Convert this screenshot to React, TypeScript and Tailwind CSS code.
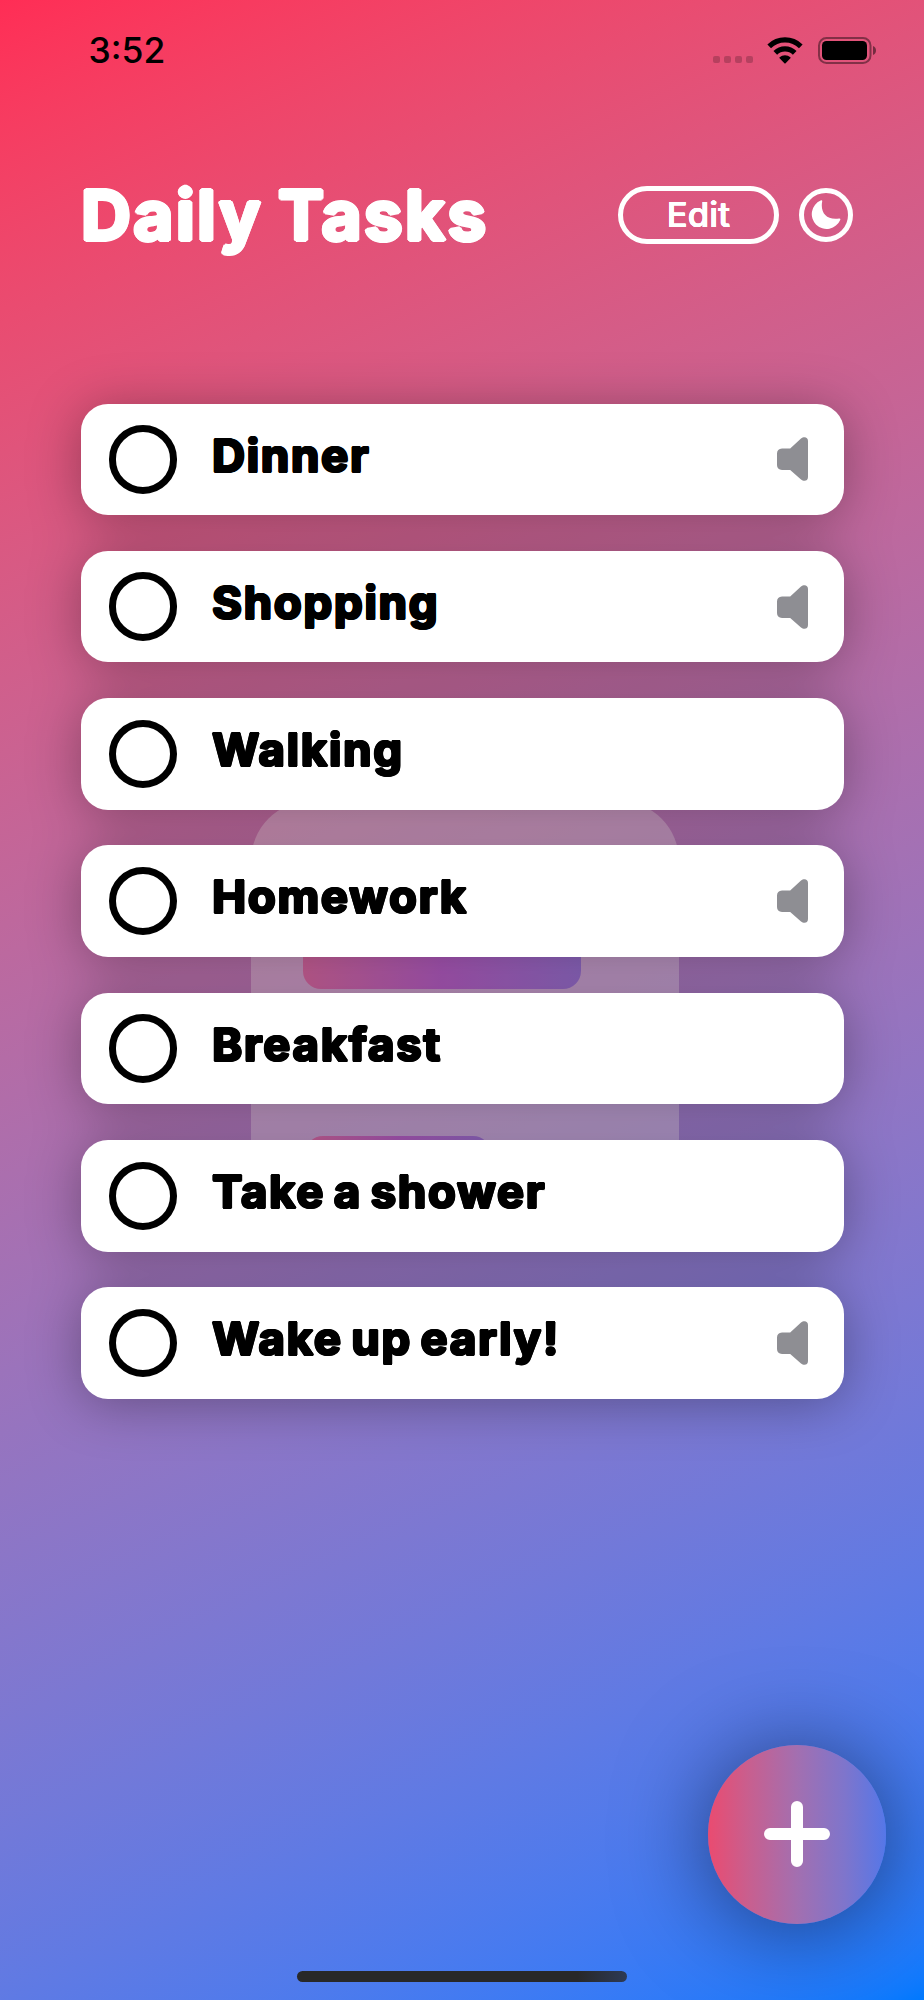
import React, { useState } from 'react'
import clsx from 'clsx'

type Task = {
  id: string
  name: string
  hasSound: boolean
}

const sampleTasks: Task[] = [
  { id: 'a', name: 'Dinner', hasSound: true },
  { id: 'b', name: 'Shopping', hasSound: true },
  { id: 'c', name: 'Walking', hasSound: false },
  { id: 'd', name: 'Homework', hasSound: true },
  { id: 'e', name: 'Breakfast', hasSound: false },
  { id: 'f', name: 'Take a shower', hasSound: false },
  { id: 'g', name: 'Wake up early!', hasSound: true },
]

const WifiIcon = () => (
  <svg className="w-[36px] h-[27px]" viewBox="0 0 36 27" fill="none">
    <path d="M2.2 9.3a22.6 22.6 0 0 1 31.6 0" stroke="#000" strokeWidth="5.2" />
    <path d="M8.3 15.9a13.8 13.8 0 0 1 19.4 0" stroke="#000" strokeWidth="5.2" />
    <path
      d="M12.6 20.3a7.8 7.8 0 0 1 10.8 0q.5.5 0 1l-4.8 4.9q-.6.6-1.2 0l-4.8-4.9q-.5-.5 0-1z"
      fill="#000"
    />
  </svg>
)

const BatteryIcon = () => (
  <svg className="w-[59px] h-[27px]" viewBox="0 0 59 27">
    <rect
      x="1"
      y="1"
      width="51.5"
      height="25"
      rx="7.5"
      fill="none"
      stroke="#000"
      strokeOpacity=".42"
      strokeWidth="2"
    />
    <rect x="4" y="4" width="45" height="19" rx="4.5" fill="#000" />
    <path d="M55 9c4 1.300 4 7.700 0 9z" fill="#000" fillOpacity=".48" />
  </svg>
)

const MoonIcon = () => (
  <svg className="w-[30px] h-[30px]" viewBox="0 0 30 30">
    <path
      d="M9.600 .6q1.800-1 1.600.8C9 12.500 15.500 20.600 28.200 18.500q1.700-.1 1 1.400A14.800 14.800 0 1 1 9.600 .6z"
      fill="#fff"
    />
  </svg>
)

const SpeakerIcon = () => (
  <svg className="w-[31px] h-[44px]" viewBox="0 0 31 44">
    <path
      d="M5 11.500h8.200L24 1.600C26.500-.6 31-.4 31 4v36c0 4.400-4.500 4.600-7 2.400L13.200 33H5q-5-.4-5-5V16.500q0-4.600 5-5z"
      fill="#8e8e93"
    />
  </svg>
)

const StatusBar = () => (
  <div className="flex h-[100px] items-center justify-between pl-[88.500px] pr-[47.500px]">
    <span className="mt-[2px] text-[35.500px] font-medium leading-none text-black">
      3:52
    </span>
    <div className="flex items-center">
      <div className="mr-[14px] mt-[18px] flex gap-[4px]">
        {[0, 1, 2, 3].map((dot) => (
          <div key={dot} className="size-[7px] rounded-[2px] bg-black/20" />
        ))}
      </div>
      <WifiIcon />
      <div className="ml-[15px] flex">
        <BatteryIcon />
      </div>
    </div>
  </div>
)

// Faded app logo that sits behind the list
const Watermark = () => (
  <div className="absolute left-[251px] top-[801px] h-[429px] w-[427.500px] rounded-[60px] bg-[#efe4e8]/33">
    <div className="absolute left-[52px] top-[128px] h-[60px] w-[278px] rounded-[18px] bg-linear-to-r from-[#cd6199] via-[#ad58bb] to-[#9068c4]" />
    <div className="absolute left-[54px] top-[335px] h-[60px] w-[186px] rounded-[18px] bg-linear-to-r from-[#cd6199] via-[#ad58bb] to-[#9068c4]" />
  </div>
)

type TaskRowProps = {
  task: Task
  isDone: boolean
  onToggle: (id: string) => void
}

const TaskRow = ({ task, isDone, onToggle }: TaskRowProps) => (
  <li className="flex h-[111.500px] items-center rounded-[27px] bg-white pl-[28px] pr-[36px]">
    <button
      aria-label={task.name}
      className={clsx(
        'size-[68.500px] rounded-full border-[7.500px] border-black',
        isDone && 'bg-black'
      )}
      onClick={() => onToggle(task.id)}
    />
    <span className="mb-[8px] ml-[35px] flex-1 whitespace-nowrap text-[45.500px] font-bold leading-none tracking-[1.8px] text-black [word-spacing:-4px] [text-shadow:1.3px_0_#000,-1.3px_0_#000,0_1.2px_#000,0_-1.2px_#000,0.9px_0.9px_#000,-0.9px_0.9px_#000,0.9px_-0.9px_#000,-0.9px_-0.9px_#000]">
      {task.name}
    </span>
    {task.hasSound && <SpeakerIcon />}
  </li>
)

export default function App() {
  const [doneIds, setDoneIds] = useState<string[]>([])

  const toggleTask = (id: string) => {
    setDoneIds((ids) =>
      ids.includes(id) ? ids.filter((item) => item !== id) : [...ids, id]
    )
  }

  return (
    <div className="relative flex h-[2000px] w-[924px] flex-col overflow-hidden bg-[linear-gradient(155.2deg_in_oklab,#ff2d55,#007aff)] font-['Inter',sans-serif]">
      <Watermark />
      <div className="relative flex flex-1 flex-col">
        <StatusBar />
        <header className="mt-[75px] flex h-[80px] items-center pl-[81px] pr-[71.500px]">
          <h1 className="flex-1 whitespace-nowrap text-[69px] font-bold leading-none tracking-[2.500px] text-white [word-spacing:-4px] [text-shadow:2px_0_#fff,-2px_0_#fff,0_2px_#fff,0_-2px_#fff,1.4px_1.4px_#fff,-1.4px_1.4px_#fff,1.4px_-1.4px_#fff,-1.4px_-1.4px_#fff]">
            Daily Tasks
          </h1>
          <button className="h-[58px] w-[161px] rounded-full border-[5px] border-white pl-[1px] text-[34.500px] font-medium leading-none tracking-[0.2px] text-white [text-shadow:0.4px_0_#fff,-0.4px_0_#fff,0_0.4px_#fff,0_-0.4px_#fff]">
            Edit
          </button>
          <button
            aria-label="Dark mode"
            className="ml-[20px] flex size-[54px] items-center justify-center rounded-full border-[5px] border-white"
          >
            <MoonIcon />
          </button>
        </header>
        <ul className="mt-[148.500px] flex flex-col gap-[35.830px] pl-[80.600px] pr-[80.400px] drop-shadow-[0_5px_26px_rgba(0,0,0,0.32)]">
          {sampleTasks.map((task) => (
            <TaskRow
              key={task.id}
              task={task}
              isDone={doneIds.includes(task.id)}
              onToggle={toggleTask}
            />
          ))}
        </ul>
        <div className="mb-[18px] mt-auto flex flex-col">
          <button
            aria-label="Add task"
            className="mb-[47.500px] mr-[38px] flex size-[178.500px] items-center justify-center self-end rounded-full bg-[linear-gradient(90deg,#ea4b70,#c85f8f_23%,#a36fb0_50%,#7e75cc_77%,#5577e8)] shadow-[0_4px_90px_rgba(0,0,0,0.5)]"
          >
            <svg className="size-[66px]" viewBox="0 0 66 66">
              <path
                d="M33 6v54M6 33h54"
                stroke="#fff"
                strokeWidth="12"
                strokeLinecap="round"
              />
            </svg>
          </button>
          <div className="h-[11px] w-[330px] self-center rounded-full bg-[linear-gradient(90deg,#282828_85%,#2d3a55)]" />
        </div>
      </div>
    </div>
  )
}
